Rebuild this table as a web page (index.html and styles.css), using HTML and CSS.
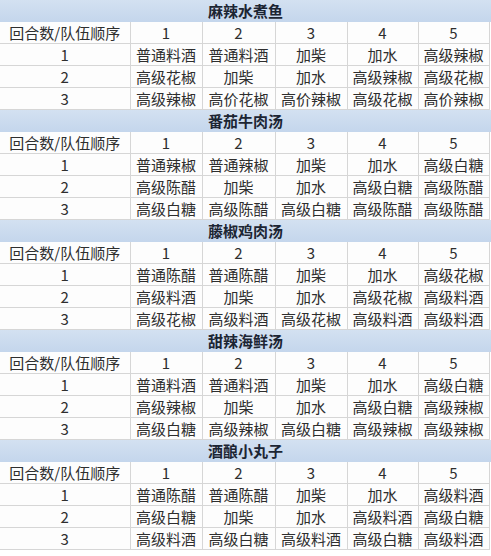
FILE: index.html
```html
<!DOCTYPE html>
<html lang="zh">
<head>
<meta charset="utf-8">
<link rel="stylesheet" href="styles.css">
</head>
<body>
<div class="sheet">
  <section class="dish">
    <div class="title">麻辣水煮鱼</div>
    <table class="grid">
      <colgroup><col class="c0"><col class="c1"><col class="c2"><col class="c3"><col class="c4"><col class="c5"></colgroup>
      <tr><td>回合数/队伍顺序</td><td>1</td><td>2</td><td>3</td><td>4</td><td>5</td></tr>
      <tr><td>1</td><td>普通料酒</td><td>普通料酒</td><td>加柴</td><td>加水</td><td>高级辣椒</td></tr>
      <tr><td>2</td><td>高级花椒</td><td>加柴</td><td>加水</td><td>高级辣椒</td><td>高级花椒</td></tr>
      <tr><td>3</td><td>高级辣椒</td><td>高价花椒</td><td>高价辣椒</td><td>高级花椒</td><td>高价辣椒</td></tr>
    </table>
  </section>
  <section class="dish">
    <div class="title">番茄牛肉汤</div>
    <table class="grid">
      <colgroup><col class="c0"><col class="c1"><col class="c2"><col class="c3"><col class="c4"><col class="c5"></colgroup>
      <tr><td>回合数/队伍顺序</td><td>1</td><td>2</td><td>3</td><td>4</td><td>5</td></tr>
      <tr><td>1</td><td>普通辣椒</td><td>普通辣椒</td><td>加柴</td><td>加水</td><td>高级白糖</td></tr>
      <tr><td>2</td><td>高级陈醋</td><td>加柴</td><td>加水</td><td>高级白糖</td><td>高级陈醋</td></tr>
      <tr><td>3</td><td>高级白糖</td><td>高级陈醋</td><td>高级白糖</td><td>高级陈醋</td><td>高级陈醋</td></tr>
    </table>
  </section>
  <section class="dish">
    <div class="title">藤椒鸡肉汤</div>
    <table class="grid">
      <colgroup><col class="c0"><col class="c1"><col class="c2"><col class="c3"><col class="c4"><col class="c5"></colgroup>
      <tr><td>回合数/队伍顺序</td><td>1</td><td>2</td><td>3</td><td>4</td><td>5</td></tr>
      <tr><td>1</td><td>普通陈醋</td><td>普通陈醋</td><td>加柴</td><td>加水</td><td>高级花椒</td></tr>
      <tr><td>2</td><td>高级料酒</td><td>加柴</td><td>加水</td><td>高级花椒</td><td>高级料酒</td></tr>
      <tr><td>3</td><td>高级花椒</td><td>高级料酒</td><td>高级花椒</td><td>高级料酒</td><td>高级料酒</td></tr>
    </table>
  </section>
  <section class="dish">
    <div class="title">甜辣海鲜汤</div>
    <table class="grid">
      <colgroup><col class="c0"><col class="c1"><col class="c2"><col class="c3"><col class="c4"><col class="c5"></colgroup>
      <tr><td>回合数/队伍顺序</td><td>1</td><td>2</td><td>3</td><td>4</td><td>5</td></tr>
      <tr><td>1</td><td>普通料酒</td><td>普通料酒</td><td>加柴</td><td>加水</td><td>高级白糖</td></tr>
      <tr><td>2</td><td>高级辣椒</td><td>加柴</td><td>加水</td><td>高级白糖</td><td>高级辣椒</td></tr>
      <tr><td>3</td><td>高级白糖</td><td>高级辣椒</td><td>高级白糖</td><td>高级辣椒</td><td>高级辣椒</td></tr>
    </table>
  </section>
  <section class="dish">
    <div class="title">酒酿小丸子</div>
    <table class="grid">
      <colgroup><col class="c0"><col class="c1"><col class="c2"><col class="c3"><col class="c4"><col class="c5"></colgroup>
      <tr><td>回合数/队伍顺序</td><td>1</td><td>2</td><td>3</td><td>4</td><td>5</td></tr>
      <tr><td>1</td><td>普通陈醋</td><td>普通陈醋</td><td>加柴</td><td>加水</td><td>高级料酒</td></tr>
      <tr><td>2</td><td>高级白糖</td><td>加柴</td><td>加水</td><td>高级料酒</td><td>高级白糖</td></tr>
      <tr><td>3</td><td>高级料酒</td><td>高级白糖</td><td>高级料酒</td><td>高级白糖</td><td>高级料酒</td></tr>
    </table>
  </section>
</div>
</body>
</html>
```
FILE: styles.css
```css
html, body {
  margin: 0;
  padding: 0;
  background: #ffffff;
}
body {
  font-family: "Noto Sans CJK SC", "Noto Sans", sans-serif;
  color: #2e2e2e;
}
.sheet {
  width: 491px;
  display: flex;
  flex-direction: column;
}
.dish {
  display: flex;
  flex-direction: column;
}
.title {
  height: 22px;
  line-height: 22px;
  text-align: center;
  font-size: 15px;
  font-weight: bold;
  color: #1c2533;
  background: linear-gradient(to bottom, #d3e1f1, #c4d6ec);
  padding-left: 0;
}
.grid {
  border-collapse: collapse;
  table-layout: fixed;
  width: 489px;
  background: #fdfdfd;
}
.c0 { width: 130px; }
.c1 { width: 72px; }
.c2 { width: 73px; }
.c3 { width: 72px; }
.c4 { width: 71px; }
.c5 { width: 71px; }
.grid td {
  height: 21px;
  padding: 0;
  border: 1px solid #d6d6d6;
  text-align: center;
  vertical-align: middle;
  font-size: 15px;
  line-height: 21px;
  white-space: nowrap;
  overflow: hidden;
}
.grid tr:first-child td {
  border-top: none;
}
.grid td:first-child {
  border-left: none;
}
```
